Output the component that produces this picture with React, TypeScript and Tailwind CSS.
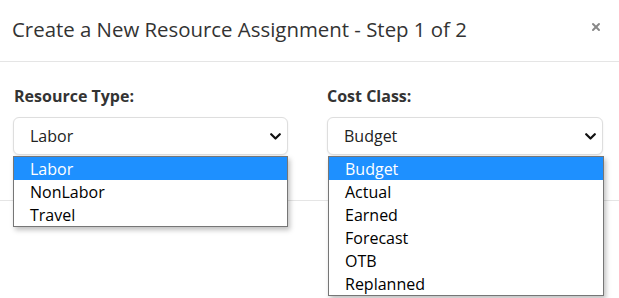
import { X } from 'lucide-react';

const resourceTypes = ['Labor', 'NonLabor', 'Travel'];
const costClasses = ['Budget', 'Actual', 'Earned', 'Forecast', 'OTB', 'Replanned'];

function Chevron() {
  return (
    <svg width="11" height="7" viewBox="0 0 11 7" className="shrink-0">
      <path d="M1.2 1.2 L5.5 5.5 L9.8 1.2" fill="none" stroke="#111" strokeWidth="2.2" strokeLinecap="round" strokeLinejoin="round" />
    </svg>
  );
}

function SelectBox({ value }: { value: string }) {
  return (
    <div className="h-[38px] flex items-center justify-between pl-[16px] pr-[6px] rounded-[6px] border border-[#dedede] bg-white shadow-[0_1px_2px_rgba(0,0,0,0.08)] text-[16px] text-[#222]">
      <span>{value}</span>
      <Chevron />
    </div>
  );
}

function ListBox({ items, className }: { items: string[]; className: string }) {
  return (
    <div className={`absolute bg-white border border-[#767676] shadow-[2px_3px_5px_rgba(0,0,0,0.25)] ${className}`}>
      {items.map((item, i) => (
        <div
          key={item}
          className={`h-[23px] flex items-center pl-[16px] text-[16px] ${i === 0 ? 'bg-[#1e90ff] text-white' : 'text-black'}`}
        >
          {item}
        </div>
      ))}
    </div>
  );
}

export default function App() {
  return (
    <div className="relative w-[619px] h-[298px] overflow-hidden bg-white font-['Open_Sans',sans-serif]">
      {/* Header */}
      <div className="h-[62px] flex items-center justify-between pl-[12px] pr-[17px] border-b border-[#e5e5e5]">
        <h1 className="text-[20.4px] text-[#333] pb-[3px]">Create a New Resource Assignment - Step 1 of 2</h1>
        <X className="w-[12px] h-[12px] text-[#888] mb-[8px]" strokeWidth={4} />
      </div>

      {/* Body */}
      <div className="grid grid-cols-[275px_276px] gap-x-[39px] pl-[13px] pt-[23px] h-[139px] border-b border-[#e5e5e5]">
        <div>
          <label className="block text-[16px] font-bold leading-[22px] text-[#333] mb-[10px] pl-[1px]">Resource Type:</label>
          <SelectBox value="Labor" />
        </div>
        <div>
          <label className="block text-[16px] font-bold leading-[22px] text-[#333] mb-[10px]">Cost Class:</label>
          <SelectBox value="Budget" />
        </div>
      </div>

      {/* Open dropdown lists */}
      <ListBox items={resourceTypes} className="top-[156px] left-[13px] w-[275px]" />
      <ListBox items={costClasses} className="top-[156px] left-[328px] w-[276px]" />
    </div>
  );
}
